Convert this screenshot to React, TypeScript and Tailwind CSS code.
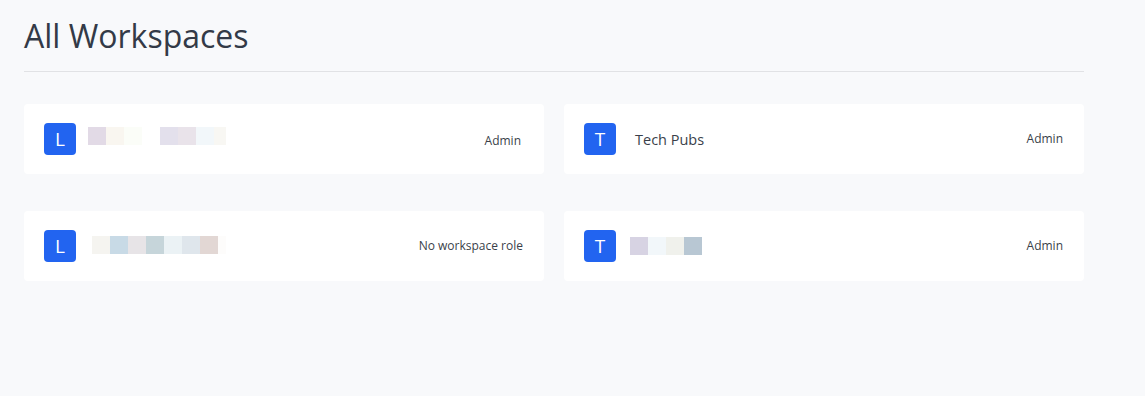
import React from "react";

type Workspace = {
  initial: string;
  name?: string;
  blocks?: string[][];
  lastWidth?: string;
  role: string;
  nameOffset: string;
  roleOffset?: string;
};

const workspaces: Workspace[] = [
  {
    initial: "L",
    blocks: [
      ["#e2dae6", "#f9f6f0", "#fbfdf8"],
      ["#e3e0ec", "#e9e3ea", "#f2f7fa", "#f8f7f3"],
    ],
    lastWidth: "w-3",
    role: "Admin",
    nameOffset: "ml-3 -mt-1.5",
    roleOffset: "mt-[3px] mr-0.5",
  },
  { initial: "T", name: "Tech Pubs", role: "Admin", nameOffset: "ml-[19px]" },
  {
    initial: "L",
    blocks: [["#f5f4f0", "#c8dae6", "#e7e4e7", "#c6d5da", "#ebf2f5", "#dfe6ec", "#e2d7d4", "#fdfcfb"]],
    lastWidth: "w-2",
    role: "No workspace role",
    nameOffset: "ml-4 -mt-0.5",
  },
  {
    initial: "T",
    blocks: [["#d7d3e3", "#f2f7fa", "#f0f1ec", "#b8c7d3"]],
    role: "Admin",
    nameOffset: "ml-3.5",
  },
];

function Redacted({ groups, lastWidth }: { groups: string[][]; lastWidth?: string }) {
  return (
    <div className="flex gap-[18px]">
      {groups.map((g, i) => (
        <div key={i} className="flex">
          {g.map((c, j) => {
            const isLast = i === groups.length - 1 && j === g.length - 1;
            return (
              <div
                key={j}
                className={`h-[18px] ${isLast && lastWidth ? lastWidth : "w-[18px]"}`}
                style={{ backgroundColor: c }}
              />
            );
          })}
        </div>
      ))}
    </div>
  );
}

function WorkspaceCard({ ws }: { ws: Workspace }) {
  return (
    <div className="bg-white rounded h-[70px] pl-5 pr-[21px] flex items-center">
      <div className="w-8 h-8 rounded bg-[#2264f0] text-white flex items-center justify-center text-[19px]">
        {ws.initial}
      </div>
      <div className={`flex-1 ${ws.nameOffset}`}>
        {ws.name ? (
          <span className="text-[14.5px] text-[#3a3f4a]">{ws.name}</span>
        ) : (
          <Redacted groups={ws.blocks ?? []} lastWidth={ws.lastWidth} />
        )}
      </div>
      <span className={`text-[12px] text-[#3a3f4a] ${ws.roleOffset ?? ""}`}>{ws.role}</span>
    </div>
  );
}

export default function App() {
  return (
    <div
      className="min-h-[396px] bg-[#f8f9fb] px-6 pt-[14px]"
      style={{ fontFamily: '"Open Sans", "Noto Sans", sans-serif' }}
    >
      <div className="w-[1060px]">
        <h1 className="text-[32px] leading-[44px] text-[#333a47] pb-[13px] border-b border-[#e1e2e5]">
          All Workspaces
        </h1>
        <div className="grid grid-cols-2 gap-x-5 gap-y-[37px] mt-8">
          {workspaces.map((ws, i) => (
            <WorkspaceCard key={i} ws={ws} />
          ))}
        </div>
      </div>
    </div>
  );
}
